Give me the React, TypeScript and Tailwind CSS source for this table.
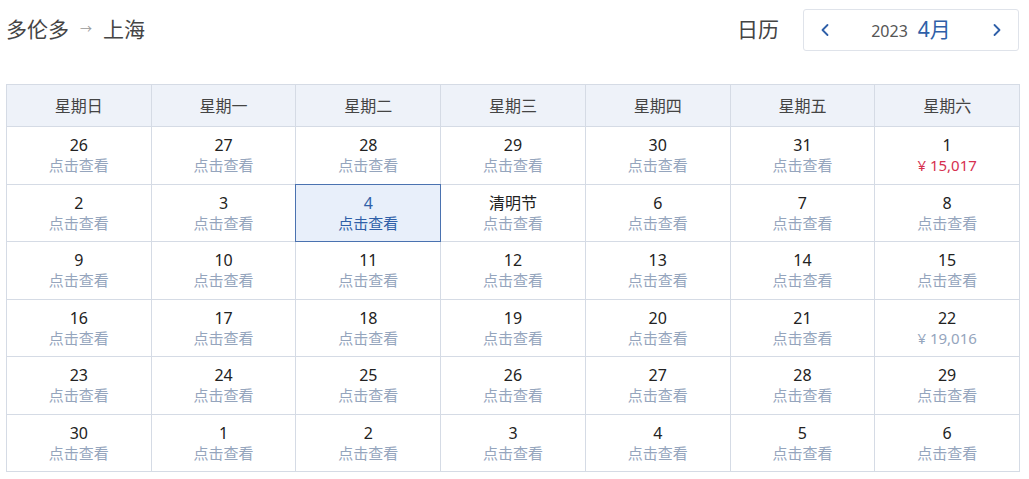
import { ChevronLeft, ChevronRight } from "lucide-react";

type Day = { label: string; sub?: string; tone?: "red" | "gray"; selected?: boolean };

const weekdays = ["星期日", "星期一", "星期二", "星期三", "星期四", "星期五", "星期六"];

const rows: Day[][] = [
  [
    { label: "26" },
    { label: "27" },
    { label: "28" },
    { label: "29" },
    { label: "30" },
    { label: "31" },
    { label: "1", sub: "¥ 15,017", tone: "red" },
  ],
  [
    { label: "2" },
    { label: "3" },
    { label: "4", selected: true },
    { label: "清明节" },
    { label: "6" },
    { label: "7" },
    { label: "8" },
  ],
  ["9", "10", "11", "12", "13", "14", "15"].map((d) => ({ label: d })),
  [
    { label: "16" },
    { label: "17" },
    { label: "18" },
    { label: "19" },
    { label: "20" },
    { label: "21" },
    { label: "22", sub: "¥ 19,016", tone: "gray" },
  ],
  ["23", "24", "25", "26", "27", "28", "29"].map((d) => ({ label: d })),
  ["30", "1", "2", "3", "4", "5", "6"].map((d) => ({ label: d })),
];

const App = () => {
  return (
    <div
      className="h-[479px] w-[1029px] bg-white text-[#333]"
      style={{ fontFamily: '"Noto Sans", "Noto Sans CJK SC", sans-serif' }}
    >
      {/* Title bar */}
      <div className="flex h-[60px] items-center justify-between pl-[6px] pr-[10px]">
        <div className="flex items-center text-[21px] text-[#444]">
          <span>多伦多</span>
          <span className="mx-[11px] text-[12px] text-[#999]">→</span>
          <span>上海</span>
        </div>
        <div className="flex items-center">
          <span className="mr-[24px] text-[21px] text-[#444]">日历</span>
          <div className="flex h-[42px] w-[216px] items-center rounded-[3px] border border-[#dfe3ea] pl-[11px] pr-[11px]">
            <ChevronLeft className="h-[20px] w-[20px] text-[#2f5fa8]" strokeWidth={2.2} />
            <div className="flex flex-1 items-baseline justify-center">
              <span className="text-[16px] text-[#555]">2023</span>
              <span className="ml-[10px] text-[21px] text-[#2f5fa8]">4月</span>
            </div>
            <ChevronRight className="h-[20px] w-[20px] text-[#2f5fa8]" strokeWidth={2.2} />
          </div>
        </div>
      </div>

      {/* Calendar */}
      <div className="ml-[6px] mt-[24px] w-[1014px] border-l border-t border-[#d5dbe5]">
        <div className="grid h-[42px] grid-cols-7 bg-[#eef2f9]">
          {weekdays.map((w) => (
            <div
              key={w}
              className="flex items-center justify-center border-b border-r border-[#d5dbe5] text-[16px] text-[#444]"
            >
              {w}
            </div>
          ))}
        </div>
        {rows.map((row, ri) => (
          <div key={ri} className="grid h-[57.5px] grid-cols-7">
            {row.map((d, ci) => (
              <div
                key={ci}
                className={
                  d.selected
                    ? "flex flex-col items-center justify-center border border-[#4a72b0] bg-[#e8effa] -ml-px -mt-px leading-[20px]"
                    : "flex flex-col items-center justify-center border-b border-r border-[#d5dbe5] leading-[20px]"
                }
              >
                <span className={d.selected ? "text-[16px] text-[#2f5fa8]" : "text-[16px] text-[#222]"}>
                  {d.label}
                </span>
                <span
                  className={
                    d.selected
                      ? "text-[15px] text-[#2f5fa8]"
                      : d.tone === "red"
                        ? "text-[15px] text-[#d6304f]"
                        : "text-[15px] text-[#95a5bd]"
                  }
                >
                  {d.sub ?? "点击查看"}
                </span>
              </div>
            ))}
          </div>
        ))}
      </div>
    </div>
  );
};

export default App;
